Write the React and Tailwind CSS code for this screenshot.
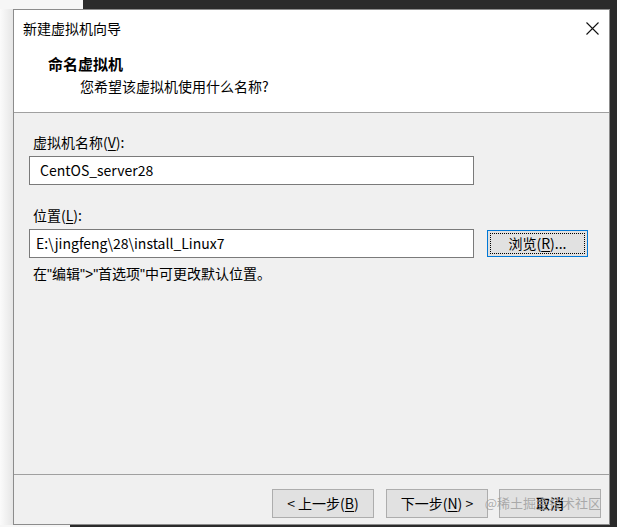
import React from 'react';

const Key = ({ children }) => <span className="underline underline-offset-2">{children}</span>;

const Q = ({ children }) => <span className="font-['Liberation_Sans',sans-serif]">{children}</span>;

const Button = ({ children, className = '' }) => (
  <button className={`w-[102px] h-[29px] bg-[#e1e1e1] border border-[#adadad] text-[14px] text-black flex items-center justify-center ${className}`}>
    {children}
  </button>
);

export default function App() {
  return (
    <div className="w-[617px] h-[527px] flex flex-col bg-[#2b2b2b] overflow-hidden font-['Noto_Sans_CJK_SC',sans-serif] text-black">
      {/* 背景上緣 */}
      <div className="h-[9px] flex shrink-0">
        <div className="w-[83px] bg-[#f6f6f6]"></div>
        <div className="flex-1 bg-[#2b2b2b]"></div>
      </div>

      <div className="flex-1 flex min-h-0">
        <div className="w-[13px] bg-gradient-to-r from-[#fbfbfb] to-[#e6e6e6]"></div>

        {/* 對話框 */}
        <div className="w-[597px] flex flex-col border border-[#8c8c8c] bg-[#f0f0f0]">
          {/* 標題區 */}
          <div className="h-[103px] bg-white border-b border-[#a0a0a0] shrink-0">
            <div className="h-[35px] flex items-center justify-between pl-[9px] pr-[10px]">
              <span className="text-[14px] leading-none">新建虚拟机向导</span>
              <svg width="13" height="13" viewBox="0 0 13 13" className="mt-[1px]">
                <path d="M0.5 0.5L12.5 12.5M12.5 0.5L0.5 12.5" stroke="#111" strokeWidth="1.1" fill="none" />
              </svg>
            </div>
            <div className="ml-[34px] mt-[9px] text-[15px] leading-[20px] font-bold">命名虚拟机</div>
            <div className="ml-[66px] mt-[3px] text-[14px] leading-[18px]">您希望该虚拟机使用什么名称?</div>
          </div>

          {/* 內容 */}
          <div className="flex-1 pl-[15px] pt-[20px]">
            <div className="ml-[4px] text-[14px] leading-[18px]">
              虚拟机名称(<Key>V</Key>):
            </div>
            <div className="mt-[5px] w-[445px] h-[29px] bg-white border border-[#7a7a7a] flex items-center pl-[10px] text-[14px]">
              CentOS_server28
            </div>

            <div className="mt-[21px] ml-[4px] text-[14px] leading-[18px]">
              位置(<Key>L</Key>):
            </div>
            <div className="mt-[5px] flex items-center gap-[13px]">
              <div className="w-[445px] h-[29px] bg-white border border-[#7a7a7a] flex items-center pl-[6px] text-[14px]">
                E:\jingfeng\28\install_Linux7
              </div>
              <button className="w-[101px] h-[27px] bg-[#e1e1e1] border border-[#0078d7] p-[2px]">
                <div className="w-full h-full border border-dotted border-black flex items-center justify-center text-[14px]">
                  浏览(<Key>R</Key>)...
                </div>
              </button>
            </div>
            <div className="mt-[6px] ml-[4px] text-[14px] leading-[18px]">
              在<Q>"</Q>编辑<Q>"&gt;"</Q>首选项<Q>"</Q>中可更改默认位置。
            </div>
          </div>

          {/* 按鈕列 */}
          <div className="h-[50px] shrink-0 border-t border-[#a0a0a0] relative flex items-start justify-end pt-[14px] pr-[8px] gap-[12px]">
            <Button>&lt; 上一步(<Key>B</Key>)</Button>
            <Button className="-mr-[1px]">下一步(<Key>N</Key>) &gt;</Button>
            <Button className="font-medium">取消</Button>
            <span className="absolute right-[8px] top-[19px] text-[13px] leading-[18px] text-[#9a9a9a]/80 pointer-events-none">
              @稀土掘金技术社区
            </span>
          </div>
        </div>

        <div className="flex-1 bg-[#2b2b2b]"></div>
      </div>

      <div className="h-[2px] flex shrink-0">
        <div className="w-[70px] bg-[#f6f6f6]"></div>
        <div className="flex-1 bg-[#2b2b2b]"></div>
      </div>
    </div>
  );
}
